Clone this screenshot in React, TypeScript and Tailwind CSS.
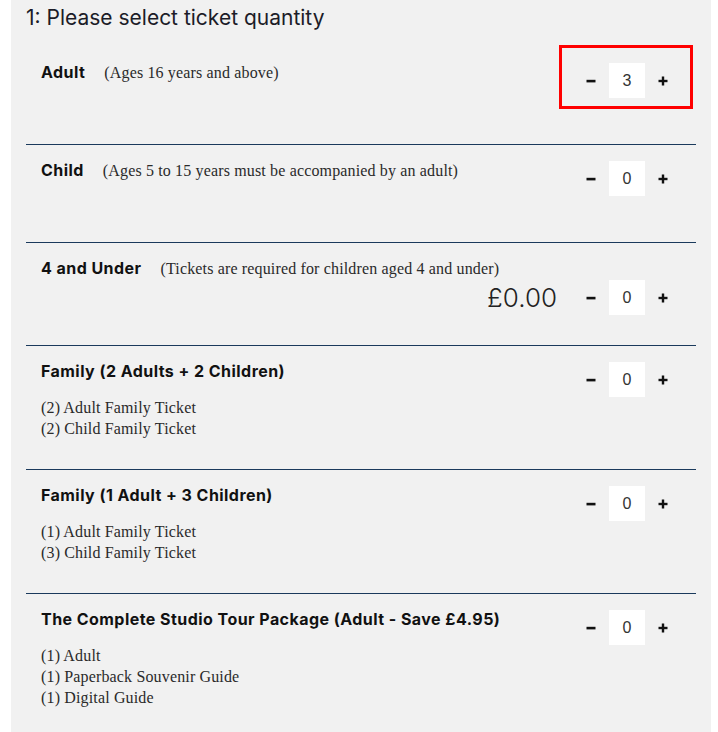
import React from "react";

const sans = "font-['Inter','Open_Sans',sans-serif]";
const serif = "font-['Liberation_Serif','Times_New_Roman',serif]";

function Minus() {
  return (
    <svg width="10" height="10" viewBox="0 0 10 10">
      <rect x="0.5" y="3.8" width="9" height="2.6" fill="#111" />
    </svg>
  );
}
function Plus() {
  return (
    <svg width="10" height="10" viewBox="0 0 10 10">
      <rect x="0.5" y="3.8" width="9" height="2.4" fill="#111" />
      <rect x="3.8" y="0.5" width="2.4" height="9" fill="#111" />
    </svg>
  );
}

function Counter({ value, highlight }: { value: number; highlight?: boolean }) {
  return (
    <div className="relative flex h-[35px] items-center">
      <button className="flex h-[35px] w-[36px] items-center justify-center">
        <Minus />
      </button>
      <div className="flex h-[35px] w-[36px] items-center justify-center bg-white font-['Liberation_Sans',Arial,sans-serif] text-[16px] text-[#333]">
        {value}
      </div>
      <button className="flex h-[35px] w-[36px] items-center justify-center">
        <Plus />
      </button>
      {highlight && (
        <div className="pointer-events-none absolute -left-[14px] -top-[18px] h-[64px] w-[134px] border-[3px] border-[#ff0000]" />
      )}
    </div>
  );
}

type Row = {
  title: string;
  note?: string;
  lines?: string[];
  value: number;
  highlight?: boolean;
  price?: string;
};

const rows: Row[] = [
  { title: "Adult", note: "(Ages 16 years and above)", value: 3, highlight: true },
  { title: "Child", note: "(Ages 5 to 15 years must be accompanied by an adult)", value: 0 },
  { title: "4 and Under", note: "(Tickets are required for children aged 4 and under)", value: 0, price: "£0.00" },
  { title: "Family (2 Adults + 2 Children)", lines: ["(2) Adult Family Ticket", "(2) Child Family Ticket"], value: 0 },
  { title: "Family (1 Adult + 3 Children)", lines: ["(1) Adult Family Ticket", "(3) Child Family Ticket"], value: 0 },
  {
    title: "The Complete Studio Tour Package (Adult - Save £4.95)",
    lines: ["(1) Adult", "(1) Paperback Souvenir Guide", "(1) Digital Guide"],
    value: 0,
  },
];

const titleCls = `${sans} text-[16px] leading-[22px] font-bold tracking-[0.45px] text-[#111]`;
const noteCls = `${serif} text-[16px] leading-[22px] tracking-[0.15px] text-[#2a2a2a]`;

export default function App() {
  return (
    <div className="min-h-screen bg-white">
      <div className="ml-[11px] h-[732px] w-[700px] overflow-hidden bg-[#f1f1f1] pt-[4px]">
        <h2 className={`${sans} pl-[15px] text-[21px] leading-[28px] font-normal text-[#1c1c28]`}>
          1: Please select ticket quantity
        </h2>
        <div className="mx-[15px] mt-[14px]">
          {rows.map((r, i) => (
            <div
              key={i}
              className={`min-h-[98px] border-t px-[15px] pt-[14px] pb-[30px] ${
                i === 0 ? "border-transparent" : "border-[#1b3a5c]"
              }`}
            >
              {r.price ? (
                <>
                  <div className="flex items-baseline">
                    <span className={titleCls}>{r.title}</span>
                    <span className={`${noteCls} ml-[19px]`}>{r.note}</span>
                  </div>
                  <div className="flex items-center justify-end gap-[16px]">
                    <span className={`${sans} text-[26px] leading-[32px] font-light text-[#222]`}>{r.price}</span>
                    <Counter value={r.value} />
                  </div>
                </>
              ) : (
                <div className="flex items-start justify-between">
                  <div>
                    <div className="flex items-baseline">
                      <span className={titleCls}>{r.title}</span>
                      {r.note && <span className={`${noteCls} ml-[19px]`}>{r.note}</span>}
                    </div>
                    {r.lines && (
                      <div className={`${serif} mt-[15px] text-[16px] leading-[21px] tracking-[0.15px] text-[#2a2a2a]`}>
                        {r.lines.map((l) => (
                          <div key={l}>{l}</div>
                        ))}
                      </div>
                    )}
                  </div>
                  <div className="mt-[2px]">
                    <Counter value={r.value} highlight={r.highlight} />
                  </div>
                </div>
              )}
            </div>
          ))}
        </div>
      </div>
    </div>
  );
}
